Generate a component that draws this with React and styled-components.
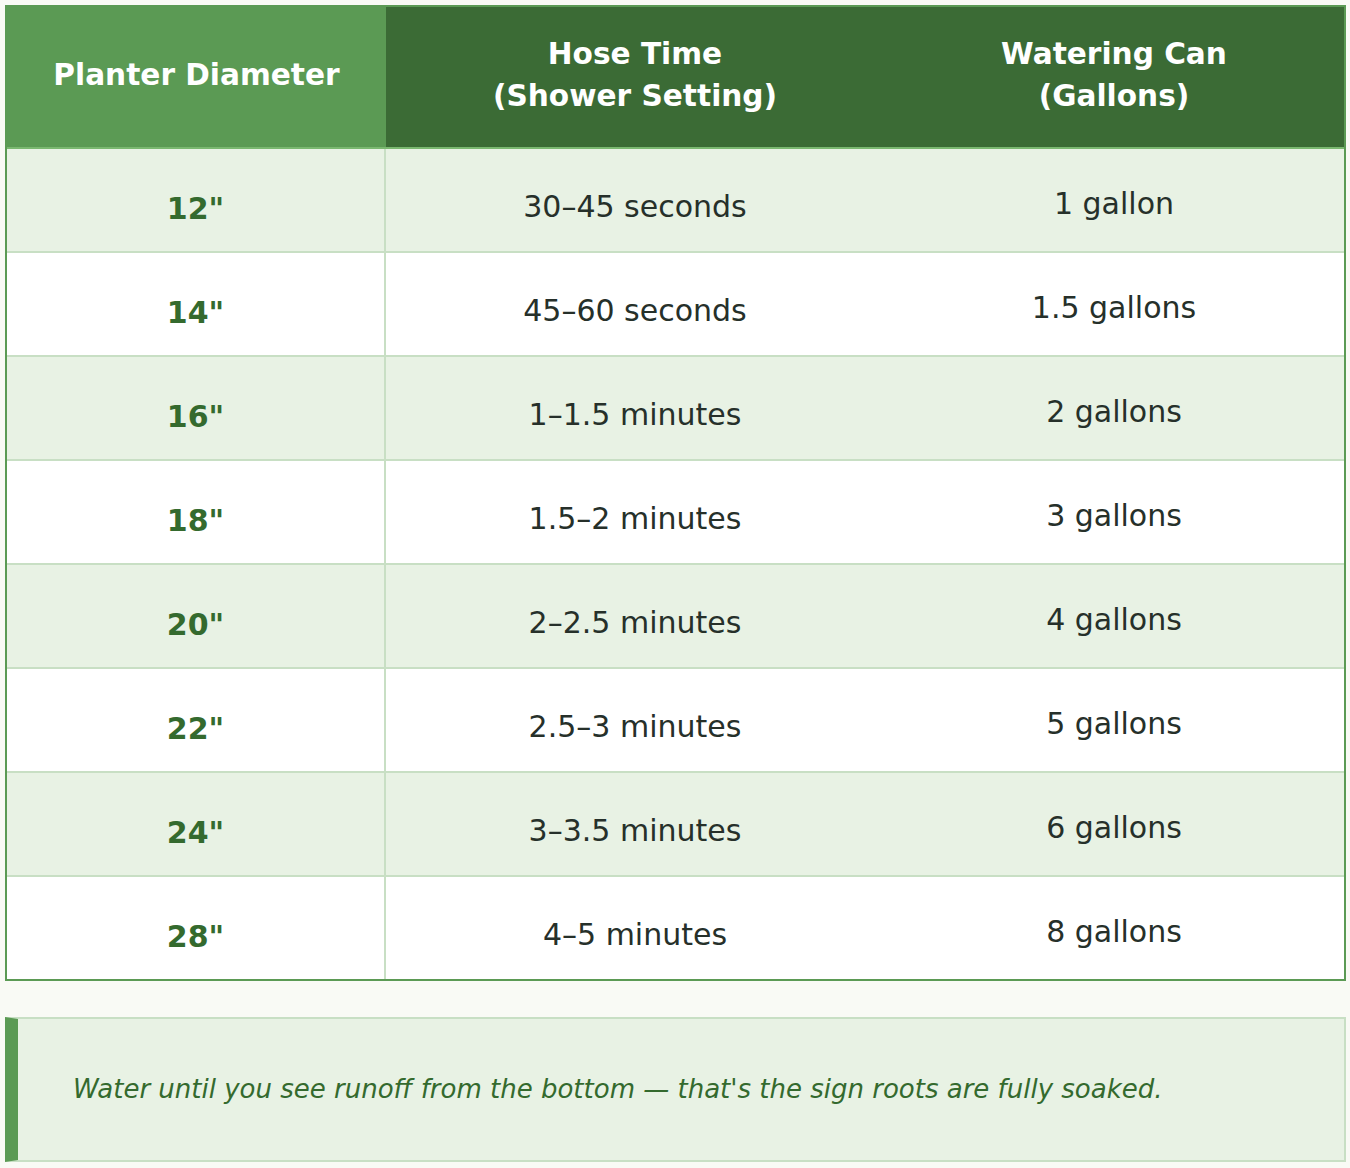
import React from "react";
import styled, { createGlobalStyle } from "styled-components";

const Global = createGlobalStyle`
  html, body { margin: 0; padding: 0; background: #f9faf5; }
  body { font-family: "DejaVu Sans", "Liberation Sans", sans-serif; }
`;

const Page = styled.div`
  padding: 5px 4px 6px 5px;
  display: flex;
  flex-direction: column;
  gap: 36px;
`;

const Table = styled.table`
  width: 1341px;
  border-collapse: separate;
  border-spacing: 0;
  border: 2px solid #5b9a54;
  table-layout: fixed;
  background: #ffffff;
`;

const Head = styled.th`
  height: 142px;
  box-sizing: border-box;
  padding: 0 12px 2px;
  background: ${(p) => (p.$light ? "#5b9a54" : "#3b6b35")};
  color: #ffffff;
  font-size: 29.6px;
  line-height: 41.6px;
  font-weight: 700;
  text-align: center;
  vertical-align: middle;
  border-bottom: 2px solid #7ab870;
`;

const Row = styled.tr`
  background: ${(p) => (p.$alt ? "#e8f2e4" : "#ffffff")};
`;

const Cell = styled.td`
  height: ${(p) => (p.$last ? "102px" : "104px")};
  box-sizing: border-box;
  padding: ${(p) => p.$shift * 2}px 12px 0;
  text-align: center;
  vertical-align: middle;
  font-size: 30px;
  line-height: 44px;
  font-weight: ${(p) => (p.$key ? 700 : 400)};
  color: ${(p) => (p.$key ? "#346a2e" : "#26302a")};
  border-bottom: ${(p) => (p.$last ? "0" : "2px solid #c8dfc4")};
  border-right: ${(p) => (p.$key ? "2px solid #c8dfc4" : "0")};
`;

const Note = styled.div`
  box-sizing: border-box;
  width: 1341px;
  background: #e8f2e4;
  border: 2px solid #c8dfc4;
  border-left: 13px solid #5b9a54;
  padding: 51px 55px;
  font-size: 26px;
  line-height: 39px;
  font-style: italic;
  color: #346a2e;
`;

const rows = [
  ["12\"", "30–45 seconds", "1 gallon"],
  ["14\"", "45–60 seconds", "1.5 gallons"],
  ["16\"", "1–1.5 minutes", "2 gallons"],
  ["18\"", "1.5–2 minutes", "3 gallons"],
  ["20\"", "2–2.5 minutes", "4 gallons"],
  ["22\"", "2.5–3 minutes", "5 gallons"],
  ["24\"", "3–3.5 minutes", "6 gallons"],
  ["28\"", "4–5 minutes", "8 gallons"],
];

export default function App() {
  return (
    <>
      <Global />
      <Page>
        <Table>
          <colgroup>
            <col style={{ width: "379px" }} />
            <col style={{ width: "498px" }} />
            <col />
          </colgroup>
          <thead>
            <tr>
              <Head $light>Planter Diameter</Head>
              <Head>
                Hose Time
                <br />
                (Shower Setting)
              </Head>
              <Head>
                Watering Can
                <br />
                (Gallons)
              </Head>
            </tr>
          </thead>
          <tbody>
            {rows.map((r, i) => {
              const last = i === rows.length - 1;
              return (
                <Row key={r[0]} $alt={i % 2 === 0}>
                  <Cell $key $shift={9} $last={last}>{r[0]}</Cell>
                  <Cell $shift={7} $last={last}>{r[1]}</Cell>
                  <Cell $shift={4} $last={last}>{r[2]}</Cell>
                </Row>
              );
            })}
          </tbody>
        </Table>
        <Note>
          Water until you see runoff from the bottom — that's the sign roots are fully soaked.
        </Note>
      </Page>
    </>
  );
}
